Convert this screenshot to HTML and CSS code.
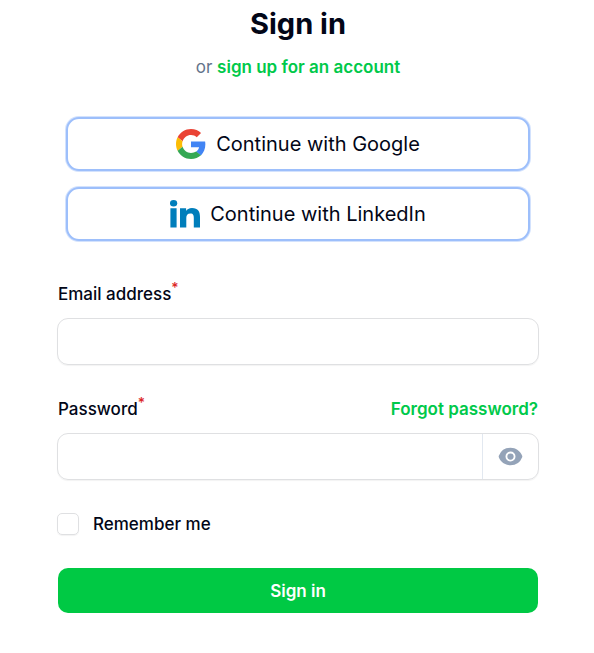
FILE: index.html
```html
<!DOCTYPE html>
<html lang="en">
<head>
<meta charset="utf-8">
<meta name="viewport" content="width=device-width, initial-scale=1">
<title>Sign in</title>
<link rel="stylesheet" href="styles.css">
</head>
<body>
<main class="page">
  <header class="header">
    <h1 class="title">Sign in</h1>
    <p class="subtitle">or <a class="link" href="#">sign up for an account</a></p>
  </header>
  <div class="providers">
    <button class="provider" type="button">
      <svg class="provider-icon" viewBox="0 0 48 48" aria-hidden="true">
        <path fill="#ea4335" d="M24 9.5c3.54 0 6.71 1.22 9.21 3.6l6.85-6.85C35.9 2.38 30.47 0 24 0 14.62 0 6.51 5.38 2.56 13.22l7.98 6.19C12.43 13.72 17.74 9.5 24 9.5z"/>
        <path fill="#4285f4" d="M46.98 24.55c0-1.57-.15-3.09-.38-4.55H24v9.02h12.94c-.58 2.96-2.26 5.48-4.78 7.18l7.73 6c4.51-4.18 7.09-10.36 7.09-17.65z"/>
        <path fill="#fbbc05" d="M10.53 28.59c-.48-1.45-.76-2.99-.76-4.59s.27-3.14.76-4.59l-7.98-6.19C.92 16.46 0 20.12 0 24c0 3.88.92 7.54 2.56 10.78l7.97-6.19z"/>
        <path fill="#34a853" d="M24 48c6.48 0 11.93-2.13 15.89-5.81l-7.73-6c-2.15 1.45-4.92 2.3-8.16 2.3-6.26 0-11.57-4.22-13.47-9.91l-7.98 6.19C6.51 42.62 14.62 48 24 48z"/>
      </svg>
      <span>Continue with Google</span>
    </button>
    <button class="provider" type="button">
      <svg class="provider-icon" viewBox="0 0 30 30" fill="#007ebb" aria-hidden="true">
        <ellipse cx="3.6" cy="4.2" rx="3.6" ry="3.2"/>
        <path d="M.4 9.3h6.2V28.4H.4zM10 9.3h6.1v2.6c.9-1.6 2.9-3 5.9-3 6.2 0 8 3.6 8 9v10.500h-6.200v-9.300c0-2.600-.4-4.700-3.400-4.700s-4.100 2-4.100 4.700v9.300H10z"/>
      </svg>
      <span>Continue with LinkedIn</span>
    </button>
  </div>
  <form class="form">
    <div class="field">
      <div class="label-row">
        <label for="email">Email address<sup class="required">*</sup></label>
      </div>
      <div class="control"><input class="input" id="email" type="email" required></div>
    </div>
    <div class="field">
      <div class="label-row">
        <label for="password">Password<sup class="required">*</sup></label>
        <a class="link" href="#">Forgot password?</a>
      </div>
      <div class="control">
        <input class="input" id="password" type="password" required>
        <button class="reveal" type="button" aria-label="Show password">
          <svg class="eye" viewBox="0 0 20 20" fill="currentColor" aria-hidden="true">
            <path d="M10 12.5a2.5 2.5 0 1 0 0-5 2.5 2.5 0 0 0 0 5z"/>
            <path fill-rule="evenodd" d="M.664 10.59a1.651 1.651 0 0 1 0-1.186A10.004 10.004 0 0 1 10 3c4.257 0 7.893 2.66 9.336 6.41.147.381.146.804 0 1.186A10.004 10.004 0 0 1 10 17c-4.257 0-7.893-2.66-9.336-6.41zM14 10a4 4 0 1 1-8 0 4 4 0 0 1 8 0z"/>
          </svg>
        </button>
      </div>
    </div>
    <label class="remember"><input class="checkbox" type="checkbox">Remember me</label>
    <button class="submit" type="submit">Sign in</button>
  </form>
</main>
</body>
</html>
```
FILE: styles.css
```css
* {
  box-sizing: border-box;
}

body {
  margin: 0;
  background: #fff;
  color: #020617;
  font: 500 17px/30px Inter, "Liberation Sans", sans-serif;
}

button,
input {
  font: inherit;
  color: inherit;
}

.page {
  padding: 4px 55px 39px 57px;
}

.header {
  text-align: center;
}

.title {
  margin: 0;
  font-size: 29px;
  font-weight: 700;
  line-height: 40px;
}

.subtitle {
  margin: 8px 0 0;
  color: #64748b;
  font-weight: 400;
}

.link {
  color: #00c94a;
  font-weight: 600;
  text-decoration: none;
}

.providers {
  display: flex;
  flex-direction: column;
  gap: 16px;
  padding: 35px 9px 0;
}

.provider {
  display: flex;
  align-items: center;
  justify-content: center;
  gap: 10px;
  height: 54px;
  padding: 0;
  border: 2px solid #9dbffb;
  border-radius: 13px;
  box-shadow: 0 0 0 1px #d3e2fd;
  background: #fff;
  font-size: 20px;
  font-weight: 400;
}

.provider-icon {
  width: 30px;
  height: 30px;
}

.form {
  display: flex;
  flex-direction: column;
  gap: 29px;
  padding-top: 38px;
}

.field {
  display: flex;
  flex-direction: column;
  gap: 9px;
}

.label-row {
  display: flex;
  justify-content: space-between;
  padding: 0 1px;
}

.required {
  color: #dc2626;
  font-size: 14px;
  line-height: 0;
}

.control {
  display: flex;
  height: 47px;
  border: 1px solid #dfe0e2;
  border-radius: 11px;
  box-shadow: 0 1px 1px #0000000d;
  overflow: hidden;
}

.input {
  flex: 1;
  min-width: 0;
  padding: 0 14px;
  border: 0;
  background: transparent;
  outline: 0;
}

.reveal {
  display: flex;
  align-items: center;
  justify-content: center;
  width: 56px;
  padding: 0;
  border: 0;
  border-left: 1px solid #e2e8f0;
  background: transparent;
  color: #94a3b8;
}

.eye {
  width: 25px;
  height: 25px;
}

.remember {
  display: flex;
  align-items: center;
  align-self: flex-start;
  gap: 14px;
}

.checkbox {
  appearance: none;
  width: 22px;
  height: 22px;
  margin: 0;
  border: 1px solid #dfe0e2;
  border-radius: 5px;
  box-shadow: 0 1px 1px #0000000d;
}

.checkbox:checked {
  background: #00c94a;
}

.submit {
  height: 45px;
  margin: 0 1px;
  padding: 0;
  border: 0;
  border-radius: 10px;
  background: #00c944;
  color: #fff;
  font-weight: 600;
}
```
